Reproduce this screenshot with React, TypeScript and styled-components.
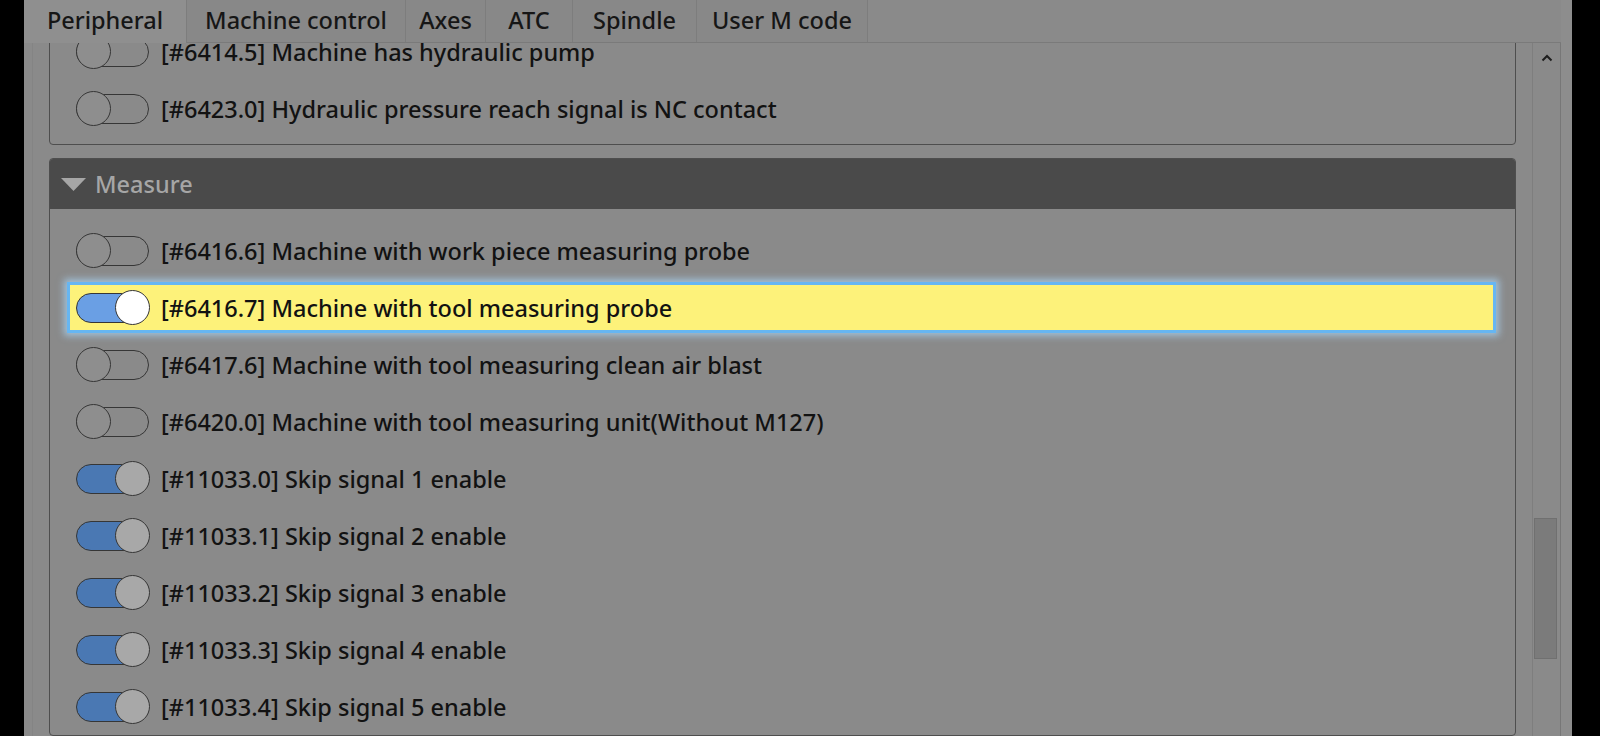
import styled, { createGlobalStyle } from "styled-components";

const GlobalStyle = createGlobalStyle`
  html, body {
    margin: 0;
    padding: 0;
    background: #000000;
  }

  body {
    font-family: "Noto Sans", "Lato", sans-serif;
  }
`;

interface Option {
  code: string;
  label: string;
  on: boolean;
  focused?: boolean;
}

const tabs = [
  { name: "Peripheral", width: 163 },
  { name: "Machine control", width: 219 },
  { name: "Axes", width: 80 },
  { name: "ATC", width: 87 },
  { name: "Spindle", width: 124 },
  { name: "User M code", width: 171 },
];

const hydraulicOptions: Option[] = [
  { code: "#6414.5", label: "Machine has hydraulic pump", on: false },
  { code: "#6423.0", label: "Hydraulic pressure reach signal is NC contact", on: false },
];

const measureOptions: Option[] = [
  { code: "#6416.6", label: "Machine with work piece measuring probe", on: false },
  { code: "#6416.7", label: "Machine with tool measuring probe", on: true, focused: true },
  { code: "#6417.6", label: "Machine with tool measuring clean air blast", on: false },
  { code: "#6420.0", label: "Machine with tool measuring unit(Without M127)", on: false },
  { code: "#11033.0", label: "Skip signal 1 enable", on: true },
  { code: "#11033.1", label: "Skip signal 2 enable", on: true },
  { code: "#11033.2", label: "Skip signal 3 enable", on: true },
  { code: "#11033.3", label: "Skip signal 4 enable", on: true },
  { code: "#11033.4", label: "Skip signal 5 enable", on: true },
];

const Toggle = ({ on, focused }: { on: boolean; focused?: boolean }) => (
  <S.Track $on={on} $focused={focused}>
    <S.Knob $on={on} $focused={focused} />
  </S.Track>
);

const OptionRow = ({ option }: { option: Option }) => (
  <S.Row>
    <S.RowInner $focused={option.focused}>
      <Toggle on={option.on} focused={option.focused} />
      <S.Label>[{option.code}] {option.label}</S.Label>
    </S.RowInner>
  </S.Row>
);

const App = () => {
  return (
    <>
      <GlobalStyle />
      <S.Screen>
        <S.Window>
          <S.Main>
            <S.TabBar>
              {tabs.map((tab, i) => (
                <S.Tab key={tab.name} $active={i === 0} $width={tab.width}>{tab.name}</S.Tab>
              ))}
            </S.TabBar>
            <S.Pane>
              <S.ScrollArea>
                <S.Content>
                  <S.Group>
                    <S.Rows $bottom={7}>
                      {hydraulicOptions.map((o) => <OptionRow key={o.code} option={o} />)}
                    </S.Rows>
                  </S.Group>
                  <S.Group>
                    <S.GroupHeader>
                      <svg width="25" height="13" viewBox="0 0 25 13">
                        <polygon points="0,0 25,0 12.5,13" fill="#a6a6a6" />
                      </svg>
                      Measure
                    </S.GroupHeader>
                    <S.Rows $top={13}>
                      {measureOptions.map((o) => <OptionRow key={o.code} option={o} />)}
                    </S.Rows>
                  </S.Group>
                </S.Content>
              </S.ScrollArea>
              <S.ScrollBar>
                <S.ArrowButton>
                  <svg width="12" height="8" viewBox="0 0 12 8">
                    <path d="M1.5 6.5 L6 2 L10.5 6.5" fill="none" stroke="#1e1e1e" strokeWidth="2" />
                  </svg>
                </S.ArrowButton>
                <S.Thumb />
              </S.ScrollBar>
            </S.Pane>
          </S.Main>
          <S.RightStrip />
        </S.Window>
      </S.Screen>
    </>
  );
};

export default App;

const S = {
  Screen: styled.div`
    display: flex;
    width: 1600px;
    height: 736px;
    padding: 0 28px 0 24px;
    box-sizing: border-box;
    background: #000000;
    overflow: hidden;
  `,

  Window: styled.div`
    flex: 1;
    display: flex;
    background: #8a8a8a;
    overflow: hidden;
  `,

  Main: styled.div`
    flex: 1;
    display: flex;
    flex-direction: column;
    min-width: 0;
  `,

  RightStrip: styled.div`
    width: 11px;
    background: #8d8d8d;
  `,

  TabBar: styled.div`
    display: flex;
    height: 43px;
    box-sizing: border-box;
    border-bottom: 1px solid #7a7a7a;
  `,

  Tab: styled.div<{ $active?: boolean; $width: number }>`
    flex: 0 0 ${(p) => p.$width}px;
    text-align: center;
    height: ${(p) => (p.$active ? "43px" : "42px")};
    line-height: 41px;
    font-size: 23.5px;
    font-weight: 500;
    color: #161616;
    white-space: nowrap;
    background: ${(p) => (p.$active ? "#8f8f8f" : "#888888")};
    border-right: 1px solid #7d7d7d;
    box-sizing: border-box;
  `,

  Pane: styled.div`
    flex: 1;
    display: flex;
    min-height: 0;
    border-right: 1px solid #777777;
  `,

  ScrollArea: styled.div`
    flex: 1;
    min-width: 0;
    overflow: hidden;
    margin-left: 8px;
    padding: 0 16px;
    border-left: 1px solid #848484;
  `,

  Content: styled.div`
    display: flex;
    flex-direction: column;
    gap: 13px;
    margin-top: -33px;
  `,

  Group: styled.section`
    border: 1px solid #4e4e4e;
    border-radius: 4px;
    overflow: hidden;
  `,

  GroupHeader: styled.div`
    display: flex;
    align-items: center;
    gap: 9px;
    height: 50px;
    padding-left: 11px;
    background: #4a4a4a;
    color: #a6a6a6;
    font-size: 23.5px;
    font-weight: 500;
  `,

  Rows: styled.div<{ $top?: number; $bottom?: number }>`
    padding-top: ${(p) => p.$top ?? 12}px;
    padding-bottom: ${(p) => p.$bottom ?? 0}px;
  `,

  Row: styled.div`
    height: 57px;
    padding: 3px 19px 3px 17px;
    box-sizing: border-box;
  `,

  RowInner: styled.div<{ $focused?: boolean }>`
    display: flex;
    align-items: center;
    gap: 12px;
    height: 51px;
    padding-left: 6px;
    box-sizing: border-box;
    border: 3px solid ${(p) => (p.$focused ? "#66b6f2" : "transparent")};
    background: ${(p) => (p.$focused ? "#fdf27a" : "transparent")};
    box-shadow: ${(p) => (p.$focused ? "0 0 7px 3px rgba(170, 215, 250, 0.7)" : "none")};
  `,

  Track: styled.div<{ $on: boolean; $focused?: boolean }>`
    position: relative;
    flex: 0 0 auto;
    width: 73px;
    height: 30px;
    box-sizing: border-box;
    border: 1.5px solid #363636;
    border-radius: 15px;
    background: ${(p) => (p.$focused ? "#6a9fe4" : p.$on ? "#4a78b3" : "transparent")};
  `,

  Knob: styled.div<{ $on: boolean; $focused?: boolean }>`
    position: absolute;
    top: -4px;
    ${(p) => (p.$on ? "right: -1.5px;" : "left: -1.5px;")}
    width: 35px;
    height: 35px;
    box-sizing: border-box;
    border: 1.5px solid #363636;
    border-radius: 50%;
    background: ${(p) => (p.$focused ? "#ffffff" : p.$on ? "#a8a8a8" : "#8e8e8e")};
  `,

  Label: styled.span`
    font-size: 23.5px;
    font-weight: 500;
    color: #121212;
    white-space: nowrap;
  `,

  ScrollBar: styled.div`
    width: 27px;
    display: flex;
    flex-direction: column;
    align-items: center;
    border-left: 1px solid #7e7e7e;
    background: #8a8a8a;
  `,

  ArrowButton: styled.div`
    display: flex;
    justify-content: center;
    width: 100%;
    margin-top: 11px;
    height: 10px;
  `,

  Thumb: styled.div`
    width: 23px;
    height: 141px;
    margin-top: 454px;
    margin-right: 3px;
    box-sizing: border-box;
    background: #7b7b7b;
    border: 1px solid #707070;
  `,
};
